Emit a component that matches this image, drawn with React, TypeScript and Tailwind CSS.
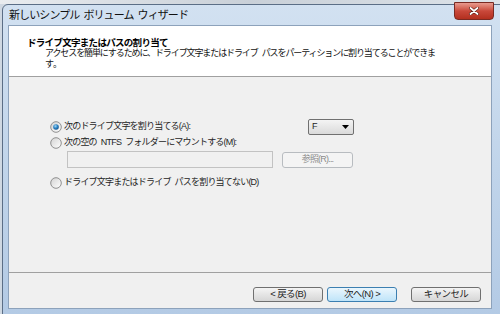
import React from 'react';

const font = { fontFamily: '"Liberation Sans", "Noto Sans CJK JP", sans-serif' };

const Radio = ({ checked }: { checked?: boolean }) => (
    <svg width="12" height="12" viewBox="0 0 12 12" className="shrink-0">
        <defs>
            <linearGradient id={checked ? 'rg1' : 'rg0'} x1="0" y1="0" x2="1" y2="1">
                <stop offset="0" stopColor="#d2d2d2" />
                <stop offset="1" stopColor="#ffffff" />
            </linearGradient>
            <radialGradient id="dot" cx="0.4" cy="0.35" r="0.7">
                <stop offset="0" stopColor="#a6d8f5" />
                <stop offset="0.5" stopColor="#2c85c6" />
                <stop offset="1" stopColor="#0f4e8a" />
            </radialGradient>
        </defs>
        <circle cx="6" cy="6" r="5.3" fill={`url(#${checked ? 'rg1' : 'rg0'})`} stroke="#8f8f8f" strokeWidth="1" />
        {checked && <circle cx="6" cy="6" r="2.8" fill="url(#dot)" />}
    </svg>
);

const WinButton = ({ label, focused }: { label: string; focused?: boolean }) => (
    <div
        className={
            'h-[15px] w-[70px] rounded-[3px] border flex items-center justify-center text-[9.5px] tracking-[-0.6px] text-[#1e1e1e] ' +
            (focused
                ? 'border-[#3c7fb1] bg-gradient-to-b from-[#eaf6fd] to-[#bfe4f9]'
                : 'border-[#707070] bg-gradient-to-b from-[#f4f4f4] to-[#d6d6d6]')
        }
    >
        {label}
    </div>
);

const Gap = () => <span className="inline-block w-[4px]" />;

export default function App() {
    return (
        <div style={font} className="w-[500px] h-[314px] overflow-hidden bg-[#cfd8e2]">
            <div className="h-[4px] bg-gradient-to-r from-[#e9ecef] via-[#c9d0d8] to-[#dde3e9]" />
            <div className="ml-[2px] w-[506px] h-[330px] rounded-t-[6px] border border-[#5b6e86] bg-gradient-to-b from-[#d2e1f1] via-[#c0d4ea] to-[#b2c9e4] relative">
                {/* title bar */}
                <div className="h-[20px] flex items-center pl-[6px] text-[11px] tracking-[-0.9px] text-[#111]">
                    新しいシンプル<Gap />ボリューム<Gap />ウィザード
                </div>
                <div className="absolute right-[13px] top-[-3px] w-[40px] h-[18px] rounded-b-[4px] border border-[#7a2a22] bg-gradient-to-b from-[#e89a8e] via-[#c9483a] to-[#b32f1e] flex items-center justify-center">
                    <svg width="10" height="8" viewBox="0 0 10 8">
                        <path d="M1.5 1 L8.5 7 M8.5 1 L1.5 7" stroke="#5a1a12" strokeWidth="3" strokeLinecap="round" />
                        <path d="M1.5 1 L8.5 7 M8.5 1 L1.5 7" stroke="#ffffff" strokeWidth="1.8" strokeLinecap="round" />
                    </svg>
                </div>

                {/* client area */}
                <div className="ml-[5px] w-[484px] h-[284px] border border-[#8da2bb] flex flex-col bg-[#f0f0f0]">
                    <div className="h-[51px] shrink-0 bg-white border-b border-[#a0a0a0] pl-[18px] pt-[11px] flex flex-col">
                        <div className="text-[9.5px] leading-[11px] font-bold tracking-[-0.7px] text-[#000]">ドライブ文字またはパスの割り当て</div>
                        <div className="pl-[18px] text-[9px] leading-[11px] tracking-[-1.1px] text-[#111] whitespace-nowrap">
                            アクセスを簡単にするために、ドライブ文字またはドライブ<Gap />パスをパーティションに割り当てることができま
                        </div>
                        <div className="pl-[18px] text-[9px] leading-[11px] text-[#111]">す。</div>
                    </div>

                    <div className="flex-1 pl-[41px] pt-[41px] text-[9px] tracking-[-0.8px] text-[#1e1e1e]">
                        <div className="flex items-center h-[17px]">
                            <div className="w-[258px] flex items-center gap-[2px]">
                                <Radio checked />
                                <span>次のドライブ文字を割り当てる(A):</span>
                            </div>
                            <div className="w-[46px] h-[16px] rounded-[2px] border border-[#707070] bg-gradient-to-b from-[#f4f4f4] to-[#dadada] flex items-center justify-between pl-[3px] pr-[4px] tracking-normal">
                                <span className="text-[9px]">F</span>
                                <svg width="7" height="4" viewBox="0 0 7 4"><path d="M0 0 H7 L3.5 4 Z" fill="#000" /></svg>
                            </div>
                        </div>
                        <div className="flex items-center h-[16px] gap-[2px]">
                            <Radio />
                            <span>次の空の<Gap />NTFS<Gap />フォルダーにマウントする(M):</span>
                        </div>
                        <div className="flex items-center gap-[9px] ml-[17px]">
                            <div className="w-[206px] h-[17px] border border-[#c2c2c2] bg-[#f0f0f0]" />
                            <div className="w-[71px] h-[16px] rounded-[3px] border border-[#b8bcc0] bg-[#f4f4f4] flex items-center justify-center text-[#8a8a8a]">
                                参照(R)...
                            </div>
                        </div>
                        <div className="flex items-center h-[16px] gap-[2px] mt-[7px]">
                            <Radio />
                            <span>ドライブ文字またはドライブ<Gap />パスを割り当てない(D)</span>
                        </div>
                    </div>

                    <div className="h-[36px] shrink-0 border-t border-[#a0a0a0] flex justify-end pt-[14px] pr-[10px]">
                        <WinButton label="< 戻る(B)" />
                        <div className="w-[4px]" />
                        <WinButton label="次へ(N) >" focused />
                        <div className="w-[14px]" />
                        <WinButton label="キャンセル" />
                    </div>
                </div>
            </div>
        </div>
    );
}
